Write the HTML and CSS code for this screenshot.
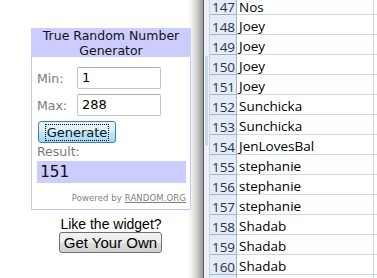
FILE: index.html
```html
<!DOCTYPE html>
<html>
<head>
<meta charset="utf-8">
<link rel="stylesheet" href="styles.css">
</head>
<body>
<div class="screen">
  <div class="pane">
    <div class="widget">
      <div class="w-head">True Random Number<br>Generator</div>
      <div class="w-body">
        <div class="field"><span class="lbl">Min:</span><span class="inp">1</span></div>
        <div class="field"><span class="lbl">Max:</span><span class="inp">288</span></div>
        <div class="gen"><span class="gen-focus">Generate</span></div>
        <div class="lbl res-lbl">Result:</div>
        <div class="result">151</div>
        <div class="powered">Powered by <span class="link">RANDOM.ORG</span></div>
      </div>
    </div>
    <div class="like">Like the widget?</div>
    <div class="own-wrap"><span class="own">Get Your Own</span></div>
  </div>
  <div class="divider"></div>
  <div class="gutter"><div class="gutter-bar"></div></div>
  <div class="sheet">
    <div class="row first"><span class="num">147</span><span class="cell">Nos</span></div>
    <div class="row"><span class="num">148</span><span class="cell">Joey</span></div>
    <div class="row"><span class="num">149</span><span class="cell">Joey</span></div>
    <div class="row"><span class="num">150</span><span class="cell">Joey</span></div>
    <div class="row"><span class="num">151</span><span class="cell">Joey</span></div>
    <div class="row"><span class="num">152</span><span class="cell">Sunchicka</span></div>
    <div class="row"><span class="num">153</span><span class="cell">Sunchicka</span></div>
    <div class="row"><span class="num">154</span><span class="cell">JenLovesBal</span></div>
    <div class="row"><span class="num">155</span><span class="cell">stephanie</span></div>
    <div class="row"><span class="num">156</span><span class="cell">stephanie</span></div>
    <div class="row"><span class="num">157</span><span class="cell">stephanie</span></div>
    <div class="row"><span class="num">158</span><span class="cell">Shadab</span></div>
    <div class="row"><span class="num">159</span><span class="cell">Shadab</span></div>
    <div class="row"><span class="num">160</span><span class="cell">Shadab</span></div>
    <div class="row"><span class="num"></span><span class="cell"></span></div>
  </div>
</div>
</body>
</html>
```

FILE: styles.css
```css
html, body {
  margin: 0;
  padding: 0;
  background: #fff;
  overflow: hidden;
}
.screen {
  display: flex;
  width: 377px;
  height: 278px;
  overflow: hidden;
}
.pane {
  width: 203px;
  flex: none;
  background: linear-gradient(to right, #fff 0, #fff 187px, #f0f0f0 192px, #cfcfcf 197px, #a8a8a8 201px, #9a9a9a 203px);
  padding-top: 28px;
  box-sizing: border-box;
}
.widget {
  margin-left: 31px;
  width: 160px;
  box-sizing: border-box;
  border: 1px solid #c6c6f4;
  border-top: none;
  background: #fff;
  font-family: "DejaVu Sans", Verdana, sans-serif;
}
.w-head {
  background: #ccccff;
  text-align: center;
  font-size: 12.5px;
  line-height: 15px;
  height: 29px;
  color: #111;
  margin: 0 -1px;
}
.w-body {
  box-sizing: border-box;
  padding: 10px 4px 0 5px;
  height: 152px;
}
.field {
  display: flex;
  align-items: center;
  height: 22px;
  margin-bottom: 5px;
}
.lbl {
  color: #7a7a7a;
  font-size: 12.5px;
}
.field .lbl {
  width: 40px;
}
.inp {
  width: 84px;
  height: 22px;
  box-sizing: border-box;
  border: 1px solid #c4c4c4;
  border-top-color: #abadb3;
  border-radius: 2px;
  font-size: 13px;
  line-height: 20px;
  padding-left: 4px;
  color: #000;
}
.gen {
  margin-left: 1px;
  width: 78px;
  height: 22px;
  box-sizing: border-box;
  border: 1px solid #3c7fb1;
  border-radius: 3px;
  background: linear-gradient(#eaf6fd 0, #d9f0fc 50%, #bee6fd 51%, #a7d9f5 100%);
  display: flex;
  align-items: center;
  justify-content: center;
}
.gen-focus {
  border: 1px dotted #000;
  font-size: 13px;
  line-height: 15px;
  padding: 0 1px;
  color: #111;
}
.res-lbl {
  margin-top: 2px;
  line-height: 14px;
  height: 14px;
}
.result {
  margin-top: 2px;
  height: 22px;
  background: #ccccff;
  font-family: "DejaVu Sans Mono", "Liberation Mono", monospace;
  font-size: 16px;
  line-height: 22px;
  padding-left: 3px;
  color: #111;
}
.powered {
  margin-top: 10px;
  text-align: right;
  font-size: 8.5px;
  color: #808080;
  letter-spacing: 0.1px;
}
.link {
  text-decoration: underline;
}
.like {
  width: 160px;
  margin-left: 31px;
  margin-top: 6px;
  text-align: center;
  font-family: "Liberation Sans", Arial, sans-serif;
  font-size: 14px;
  line-height: 16px;
  color: #000;
}
.own-wrap {
  display: flex;
  padding-left: 59px;
}
.own {
  display: inline-flex;
  align-items: center;
  justify-content: center;
  width: 103px;
  height: 21px;
  box-sizing: border-box;
  border: 1px solid #707070;
  border-radius: 3px;
  background: linear-gradient(#f2f2f2 0, #ebebeb 50%, #dddddd 51%, #cfcfcf 100%);
  font-family: "Liberation Sans", Arial, sans-serif;
  font-size: 15px;
  color: #000;
}
.divider {
  width: 1px;
  flex: none;
  background: #5a5a5a;
}
.gutter {
  width: 5px;
  flex: none;
  background: #eef2f8;
  display: flex;
  flex-direction: column;
  padding-top: 56px;
  box-sizing: border-box;
}
.gutter-bar {
  margin-left: 1px;
  width: 3px;
  height: 90px;
  background: #c9d9ee;
}
.sheet {
  flex: 1;
  font-family: "Open Sans", "Noto Sans", sans-serif;
  font-size: 13.5px;
}
.row {
  display: flex;
  height: 20px;
  box-sizing: border-box;
  border-bottom: 1px solid #d0d7e5;
}
.num {
  width: 28px;
  flex: none;
  box-sizing: border-box;
  background: #e4ecf7;
  border-right: 1px solid #9eb6ce;
  border-left: 1px solid #c5d4e8;
  border-bottom: 1px solid #9eb6ce;
  margin-bottom: -1px;
  color: #27334a;
  text-align: center;
  line-height: 20px;
  padding-top: 2px;
  padding-left: 1px;
}
.cell {
  width: 137px;
  flex: none;
  box-sizing: border-box;
  border-right: 1px solid #d0d7e5;
  padding-left: 2px;
  padding-top: 2px;
  line-height: 19px;
  color: #000;
}
.row.first {
  height: 15px;
}
.row.first .num,
.row.first .cell {
  padding-top: 0;
  line-height: 15px;
}
```
